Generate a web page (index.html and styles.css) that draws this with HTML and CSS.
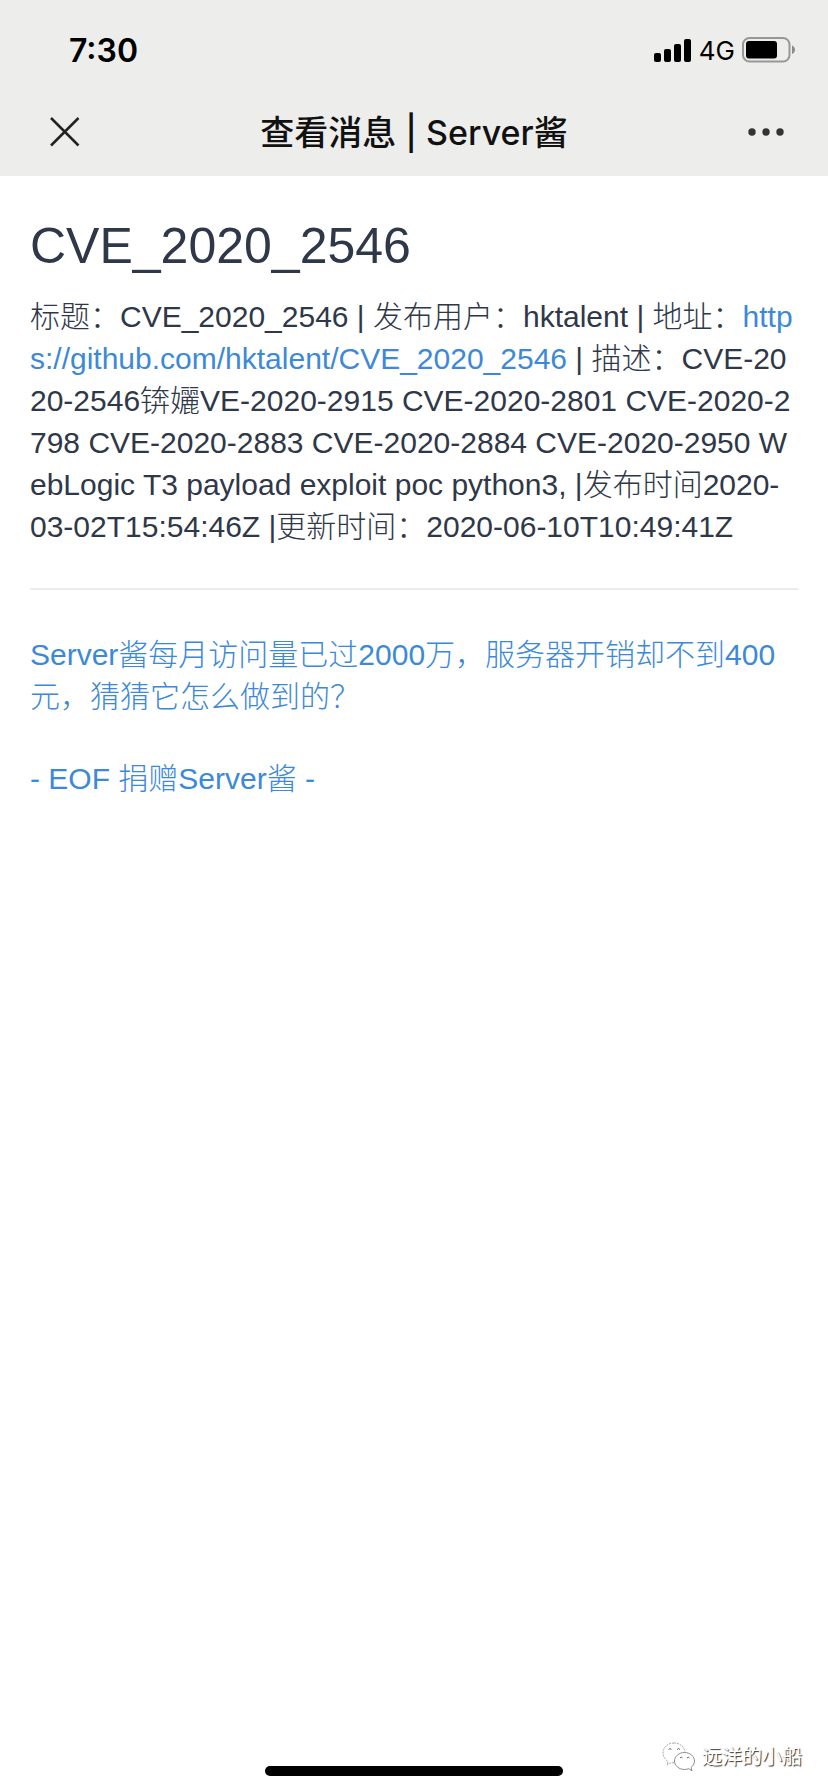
FILE: index.html
```html
<!DOCTYPE html>
<html lang="zh-CN">
<head>
<meta charset="utf-8">
<meta name="viewport" content="width=device-width, initial-scale=1">
<title>查看消息 | Server酱</title>
<link rel="stylesheet" href="styles.css">
</head>
<body>
<div class="screen">
  <header class="topbar">
    <div class="status">
      <span class="time">7:30</span>
      <div class="indicators">
        <svg class="signal" width="38" height="24" viewBox="0 0 38 24" aria-hidden="true">
          <rect x="0" y="15" width="7" height="9" rx="2"/>
          <rect x="10" y="11" width="7" height="13" rx="2"/>
          <rect x="20" y="6" width="7" height="18" rx="2"/>
          <rect x="30" y="1" width="7" height="23" rx="2"/>
        </svg>
        <span class="network">4G</span>
        <svg class="battery" width="54" height="26" viewBox="0 0 54 26" aria-hidden="true">
          <rect x="1" y="1" width="46.500" height="23.500" rx="6.500" fill="none" stroke="#979797" stroke-width="2"/>
          <rect x="4" y="4" width="31" height="17.500" rx="3"/>
          <path d="M50 8.500c4 1.500 4 7 0 8.500z" fill="#8b8b8b"/>
        </svg>
      </div>
    </div>
    <nav class="nav">
      <button class="icon-button" type="button" aria-label="关闭">
        <svg width="30" height="30" viewBox="0 0 30 30" aria-hidden="true"><path d="M1 1L28.500 28.500M28.500 1L1 28.500" fill="none" stroke="#222" stroke-width="2.500"/></svg>
      </button>
      <div class="nav-title">查看消息 | Server酱</div>
      <button class="icon-button" type="button" aria-label="更多">
        <svg width="36" height="30" viewBox="0 0 36 30" aria-hidden="true"><g fill="#333"><circle cx="4" cy="15" r="3.700"/><circle cx="18" cy="15" r="3.700"/><circle cx="32" cy="15" r="3.700"/></g></svg>
      </button>
    </nav>
  </header>
  <main class="message">
    <h1 class="heading">CVE_2020_2546</h1>
    <p class="text">标题：CVE_2020_2546 | 发布用户：hktalent | 地址：<a class="link" href="https://github.com/hktalent/CVE_2020_2546">https://github.com/hktalent/CVE_2020_2546</a> | 描述：CVE-2020-2546锛孋VE-2020-2915 CVE-2020-2801 CVE-2020-2798 CVE-2020-2883 CVE-2020-2884 CVE-2020-2950 WebLogic T3 payload exploit poc python3, |发布时间2020-<span class="keep">03-02T15:54:46Z</span> |更新时间：2020-06-10T10:49:41Z</p>
    <hr class="divider">
    <p class="text"><a class="link" href="#promo">Server酱每月访问量已过2000万，服务器开销却不到400元，猜猜它怎么做到的？</a></p>
    <p class="text"><a class="link" href="#donate">- EOF 捐赠Server酱 -</a></p>
  </main>
  <div class="home-indicator"></div>
  <div class="watermark">
    <svg width="34" height="30" viewBox="0 0 34 30" aria-hidden="true">
      <g fill="#fff" stroke="#8a8a8a" stroke-width="1">
        <path stroke="#aaa" stroke-dasharray="2 1" d="M12 1C5.500 1 1 5.500 1 11c0 3.500 2 6.500 5 8.500L5 23l4.500-2.500C18 22 23 17 23 11S18 1 12 1z"/>
        <path d="M22.500 10.500c-5.500 0-10 4-10 8.500s4.500 8.500 10 8.500c1.500 0 3-.3 4-.8l3.500 2-1-3.200c2.200-1.600 3.500-4 3.500-6.500 0-4.500-4.500-8.500-10-8.500z"/>
      </g>
      <path d="M6.500 7.500q1.500-2 3 0M15 7.500q1.500-2 3 0M18 16q1.200-1.800 2.500 0M25 16q1.200-1.800 2.500 0" fill="none" stroke="#666"/>
    </svg>
    <span class="account">远洋的小船</span>
  </div>
</div>
</body>
</html>
```
FILE: styles.css
```css
* {
  box-sizing: border-box;
}

body {
  margin: 0;
  background: #fff;
  color: #2f3848;
  font-family: "Liberation Sans", "Noto Sans CJK SC", sans-serif;
}

.screen {
  position: relative;
  display: flex;
  flex-direction: column;
  min-height: 100vh;
}

.topbar {
  background: #ededec;
  color: #111;
  font-family: Inter, "Noto Sans CJK SC", sans-serif;
}

.status {
  display: flex;
  align-items: center;
  justify-content: space-between;
  height: 88px;
  padding: 12px 32px 0 69px;
}

.time {
  color: #000;
  font-size: 32px;
  font-weight: 600;
}

.indicators {
  display: flex;
  align-items: center;
  gap: 7px;
  color: #000;
}

.network {
  font-size: 26px;
  font-weight: 400;
}

.nav {
  display: flex;
  align-items: center;
  justify-content: space-between;
  height: 88px;
  padding: 0 44px 0 50px;
}

.icon-button {
  display: flex;
  padding: 0;
  border: 0;
  background: none;
}

.nav-title {
  padding-bottom: 4px;
  font-size: 34px;
  font-weight: 500;
}

.message {
  flex: 1;
  padding: 40px 30px;
}

.heading {
  margin: 0 0 20px;
  font-size: 50px;
  font-weight: 400;
  line-height: 60px;
}

.text {
  margin: 0 0 40px;
  font-size: 30px;
  font-weight: 300;
  line-height: 42px;
  word-break: break-all;
}

.keep {
  white-space: nowrap;
}

.link {
  color: #3c89d9;
  text-decoration: none;
}

.divider {
  height: 2px;
  margin: 40px 0 44px;
  border: 0;
  background: #ebebed;
}

.home-indicator {
  align-self: center;
  width: 36%;
  height: 10px;
  margin-bottom: 16px;
  border-radius: 5px;
  background: #000;
}

.watermark {
  position: absolute;
  right: 26px;
  bottom: 20px;
  display: flex;
  align-items: center;
  gap: 6px;
}

.account {
  color: #fff;
  font-size: 20px;
  line-height: 30px;
  text-shadow: 1px 1px 1px #333;
}
```
